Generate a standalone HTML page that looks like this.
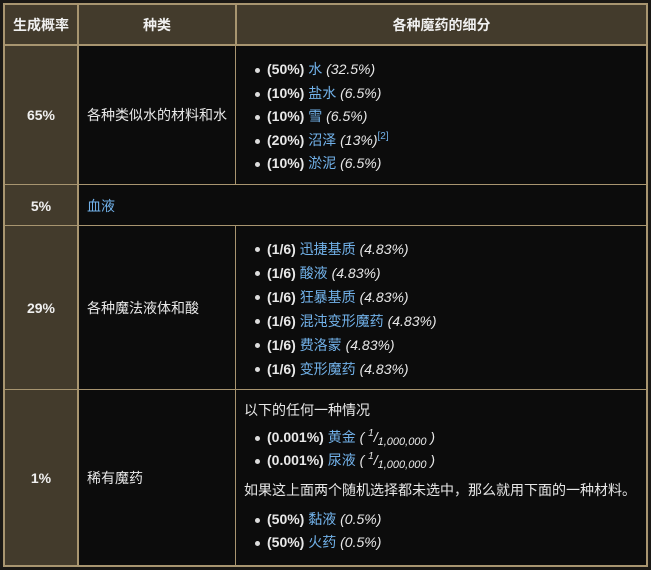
<!DOCTYPE html>
<html><head><meta charset="utf-8"><style>
body{margin:0;width:651px;height:570px;background:#1a1815;font-family:"Liberation Sans","Noto Sans CJK SC",sans-serif;font-size:14px;color:#e8e8e8;position:relative;overflow:hidden}
.c{position:absolute;box-sizing:border-box}
.h{background:#433b2c;font-weight:bold;color:#f0f0f0;display:flex;align-items:center;justify-content:center}
.d{background:#0c0c0c}
.v{display:flex;align-items:center;padding-left:9px}
.line{position:absolute;background:#a89570}
a{color:#72b2ea;text-decoration:none}
i{font-style:italic}
ul{margin:0;padding:0;list-style:none}
li{position:relative;padding-left:20px;height:24px;line-height:24px;white-space:nowrap}
li:before{content:"";position:absolute;left:8px;top:10px;width:5px;height:5px;border-radius:3px;background:#ddd}
sup{font-size:10px;vertical-align:6px;line-height:0}
sub{font-size:11px;vertical-align:-3px;line-height:0}
</style></head><body>
<div class="c h" style="left:4px;top:4px;width:74px;height:41px">生成概率</div>
<div class="c h" style="left:78px;top:4px;width:158px;height:41px">种类</div>
<div class="c h" style="left:236px;top:4px;width:411px;height:41px">各种魔药的细分</div>

<div class="c h" style="left:4px;top:45px;width:74px;height:140px">65%</div>
<div class="c d v" style="left:78px;top:45px;width:158px;height:140px">各种类似水的材料和水</div>
<div class="c d" style="left:236px;top:45px;width:411px;height:140px;padding:13px 0 0 11px">
<ul>
<li style="height:23.5px;line-height:23.5px"><b>(50%)</b> <a>水</a> <i>(32.5%)</i></li>
<li style="height:23.5px;line-height:23.5px"><b>(10%)</b> <a>盐水</a> <i>(6.5%)</i></li>
<li style="height:23.5px;line-height:23.5px"><b>(10%)</b> <a>雪</a> <i>(6.5%)</i></li>
<li style="height:23.5px;line-height:23.5px"><b>(20%)</b> <a>沼泽</a> <i>(13%)</i><sup><a>[2]</a></sup></li>
<li style="height:23.5px;line-height:23.5px"><b>(10%)</b> <a>淤泥</a> <i>(6.5%)</i></li>
</ul></div>

<div class="c h" style="left:4px;top:185px;width:74px;height:41px">5%</div>
<div class="c d v" style="left:78px;top:185px;width:569px;height:41px"><a>血液</a></div>

<div class="c h" style="left:4px;top:226px;width:74px;height:164px">29%</div>
<div class="c d v" style="left:78px;top:226px;width:158px;height:164px">各种魔法液体和酸</div>
<div class="c d" style="left:236px;top:226px;width:411px;height:164px;padding:11px 0 0 11px">
<ul>
<li><b>(1/6)</b> <a>迅捷基质</a> <i>(4.83%)</i></li>
<li><b>(1/6)</b> <a>酸液</a> <i>(4.83%)</i></li>
<li><b>(1/6)</b> <a>狂暴基质</a> <i>(4.83%)</i></li>
<li><b>(1/6)</b> <a>混沌变形魔药</a> <i>(4.83%)</i></li>
<li><b>(1/6)</b> <a>费洛蒙</a> <i>(4.83%)</i></li>
<li><b>(1/6)</b> <a>变形魔药</a> <i>(4.83%)</i></li>
</ul></div>

<div class="c h" style="left:4px;top:390px;width:74px;height:176px">1%</div>
<div class="c d v" style="left:78px;top:390px;width:158px;height:176px">稀有魔药</div>
<div class="c d" style="left:236px;top:390px;width:411px;height:176px;padding:8px 0 0 8px">
<div style="height:28px;line-height:24px">以下的任何一种情况</div>
<ul style="margin-left:3px">
<li style="height:23px;line-height:23px"><b>(0.001%)</b> <a>黄金</a> <i>( <sup>1</sup>/<sub>1,000,000</sub> )</i></li>
<li style="height:23px;line-height:23px"><b>(0.001%)</b> <a>尿液</a> <i>( <sup>1</sup>/<sub>1,000,000</sub> )</i></li>
</ul>
<div style="height:36px;line-height:36px">如果这上面两个随机选择都未选中，那么就用下面的一种材料。</div>
<ul style="margin-left:3px">
<li style="height:23px;line-height:23px"><b>(50%)</b> <a>黏液</a> <i>(0.5%)</i></li>
<li style="height:23px;line-height:23px"><b>(50%)</b> <a>火药</a> <i>(0.5%)</i></li>
</ul></div>

<div class="line" style="left:3px;top:3px;width:645px;height:2px"></div>
<div class="line" style="left:3px;top:565px;width:645px;height:2px"></div>
<div class="line" style="left:3px;top:3px;width:2px;height:564px"></div>
<div class="line" style="left:646px;top:3px;width:2px;height:564px"></div>
<div class="line" style="left:77px;top:3px;width:2px;height:564px"></div>
<div class="line" style="left:235px;top:3px;width:2px;height:42px"></div>
<div class="line" style="left:235px;top:45px;width:1px;height:140px"></div>
<div class="line" style="left:235px;top:226px;width:1px;height:341px"></div>
<div class="line" style="left:3px;top:44px;width:645px;height:2px"></div>
<div class="line" style="left:3px;top:184px;width:645px;height:1px"></div>
<div class="line" style="left:3px;top:225px;width:645px;height:1px"></div>
<div class="line" style="left:3px;top:389px;width:645px;height:1px"></div>
</body></html>
